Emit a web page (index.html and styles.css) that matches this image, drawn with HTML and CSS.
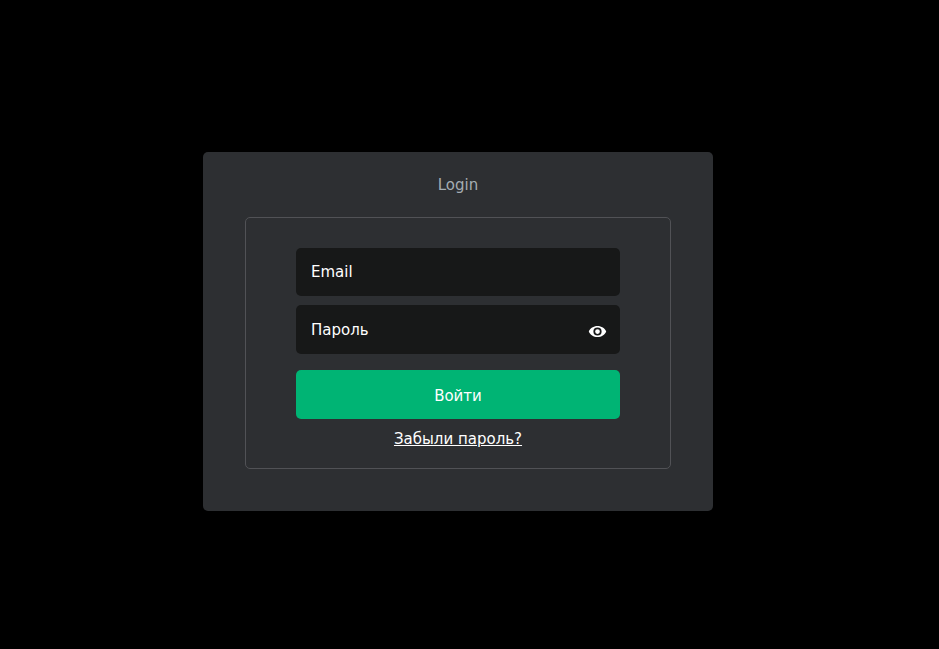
FILE: index.html
```html
<!DOCTYPE html>
<html lang="ru">
<head>
    <meta charset="UTF-8">
    <title>Login</title>
    <link rel="stylesheet" href="styles.css">
</head>
<body>

    <main class="login-card">
        <h1 class="login-title">Login</h1>

        <form class="login-box">
            <input class="field" type="text" placeholder="Email">

            <div class="password-row">
                <input class="field" type="password" placeholder="Пароль">
                <svg class="eye-icon" viewBox="0 0 24 24" width="19" height="19" aria-hidden="true">
                    <path fill="#fff" fill-rule="evenodd" d="M12 5C7 5 2.7 7.9 1 12c1.7 4.100 6 7 11 7s9.300-2.900 11-7c-1.700-4.100-6-7-11-7zM12 17.200a5.200 5.200 0 1 1 0-10.400 5.200 5.200 0 0 1 0 10.400zm0-8.200a3 3 0 1 0 0 6 3 3 0 0 0 0-6z"/>
                </svg>
            </div>

            <button class="submit-btn" type="button">Войти</button>
            <a class="forgot-link" href="#">Забыли пароль?</a>
        </form>
    </main>

</body>
</html>
```

FILE: styles.css
```css
html, body {
    height: 100%;
    margin: 0;
}

body {
    background: #000;
    box-sizing: border-box;
    padding: 152px 0 0 203px;
    font-family: "DejaVu Sans", sans-serif;
    color: #fff;
}

/* card */
.login-card {
    box-sizing: border-box;
    width: 510px;
    height: 359px;
    padding: 23px 42px 0;
    background: #2d2f32;
    border-radius: 5px;
}

.login-title {
    margin: 0 0 21px;
    font-size: 15px;
    font-weight: 400;
    line-height: 21px;
    text-align: center;
    color: #a5adb3;
}

.login-box {
    box-sizing: border-box;
    height: 252px;
    padding: 30px 50px 0;
    display: flex;
    flex-direction: column;
    align-items: stretch;
    border: 1px solid #515256;
    border-radius: 5px;
}

/* inputs */
.field {
    box-sizing: border-box;
    display: block;
    width: 100%;
    height: 48px;
    padding: 0 15px;
    border: 0;
    outline: 0;
    border-radius: 5px;
    background: #171818;
    color: #fff;
    font-family: inherit;
    font-size: 15px;
}

.field::placeholder {
    color: #fff;
    opacity: 1;
}

.password-row {
    position: relative;
    margin-top: 9px;
}

.password-row .field {
    height: 49px;
}

.eye-icon {
    position: absolute;
    right: 13px;
    top: 17px;
}

/* button + link */
.submit-btn {
    height: 49px;
    margin-top: 16px;
    padding: 2px 0 0;
    border: 0;
    border-radius: 5px;
    background: #00b474;
    color: #fff;
    font-family: inherit;
    font-size: 15px;
}

.forgot-link {
    margin-top: 10px;
    font-size: 15px;
    line-height: 21px;
    text-align: center;
    color: #fff;
}
```
